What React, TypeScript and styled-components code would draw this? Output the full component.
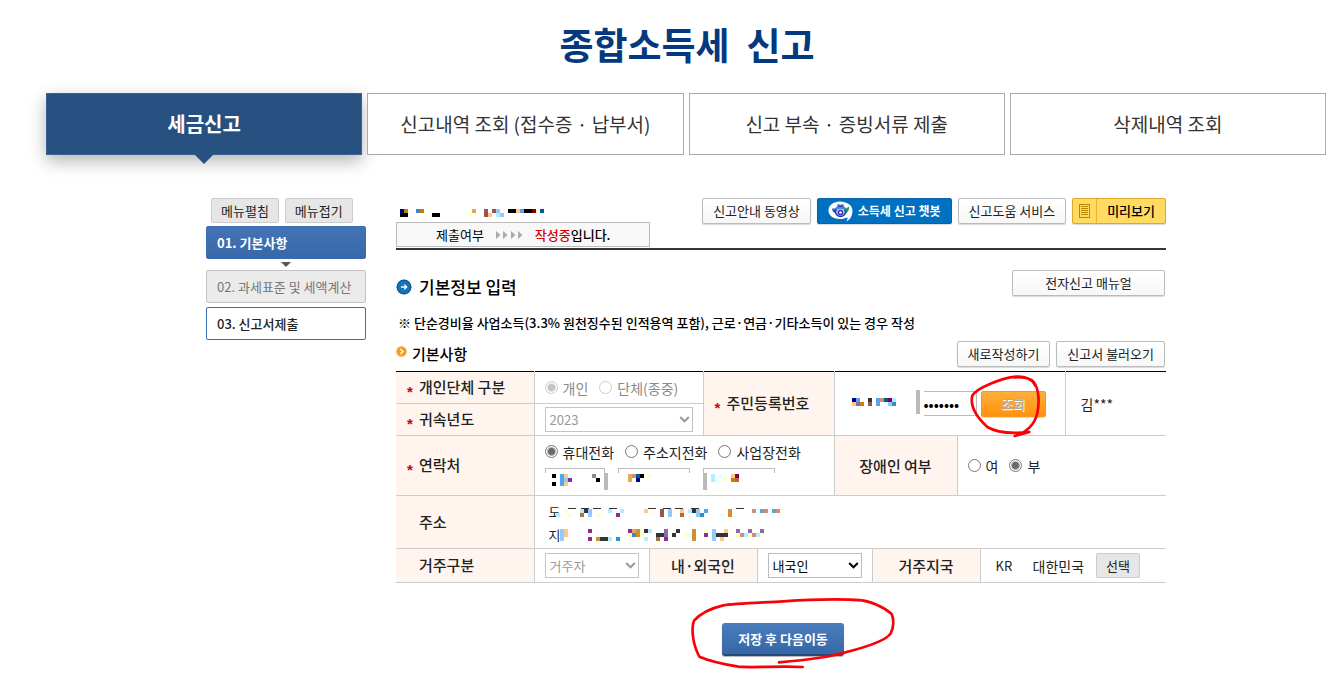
import React from 'react';
import styled, { createGlobalStyle, css } from 'styled-components';

const GlobalStyle = createGlobalStyle`
  *, *::before, *::after { box-sizing: border-box; }
  body {
    margin: 0;
    background: #fff;
    color: #222;
    font-family: "Noto Sans CJK KR", "Noto Sans", sans-serif;
    font-size: 14px;
    line-height: 20px;
  }
  button, input, select { font-family: inherit; margin: 0; }
  svg { display: block; }
`;

/* ---------- pixelated private data ---------- */

const PALETTE: Record<string, string> = {
  k: '#000000', K: '#333338', g: '#8a8a8a', n: '#000080', B: '#0055a5', b: '#2f8fd0',
  s: '#55a5ea', l: '#8fcbff', c: '#b5ecff', q: '#e4ffff', y: '#ffffcc', p: '#ffc985',
  o: '#e8a552', d: '#d09030', t: '#d09070', r: '#a05050', w: '#b07030', G: '#c88000',
  m: '#800050', M: '#800000', v: '#9068b0', V: '#8a2f90',
};

const CELL = 4;

interface MosaicProps {
  cols: number;
  rows: string[];
  top?: number[];
}

const Pixels = styled.svg`
  flex: none;
`;

function Mosaic({ cols, rows, top }: MosaicProps) {
  const width = cols * CELL;
  const offset = top ? 1 : 0;
  const height = rows.length * CELL + offset;
  return (
    <Pixels width={width} height={height} viewBox={`0 0 ${width} ${height}`} shapeRendering="crispEdges" aria-hidden="true">
      {top?.map((x) => <rect key={x} x={x} y={0} width={8} height={1} fill="#333" />)}
      {rows.flatMap((row, y) =>
        row.split(' ').filter(Boolean).map((token) => {
          const col = parseInt(token, 10);
          return (
            <rect key={`${y}-${token}`} x={col * CELL} y={y * CELL + offset} width={CELL} height={CELL} fill={PALETTE[token.slice(-1)]} />
          );
        }),
      )}
    </Pixels>
  );
}

/* ---------- page frame ---------- */

const Page = styled.div`
  padding: 14px 13px 20px 46px;
`;

const Title = styled.h1`
  margin: 0 0 19px;
  padding-left: 2px;
  font-size: 37px;
  line-height: 60px;
  font-weight: 700;
  color: #04397f;
  text-align: center;
  white-space: pre;
`;

const Tabs = styled.nav`
  display: grid;
  grid-template-columns: repeat(4, 1fr);
  gap: 5px;
`;

const Tab = styled.a<{ $active?: boolean }>`
  position: relative;
  display: flex;
  align-items: center;
  justify-content: center;
  height: 62px;
  border: 1px solid #aaa;
  background: #fff;
  color: #333;
  font-size: 19px;
  line-height: 28px;
  text-decoration: none;
  white-space: nowrap;
  ${({ $active }) => $active && css`
    border-color: #3c6290;
    background: #265080;
    color: #fff;
    font-size: 20px;
    font-weight: 700;
    box-shadow: 0 6px 16px rgba(0, 0, 0, 0.3);
    &::after {
      content: "";
      position: absolute;
      top: 100%;
      left: 50%;
      margin-left: -10px;
      border: 10px solid transparent;
      border-top-color: #265080;
      border-bottom: 0;
    }
  `}
`;

const Body = styled.div`
  display: flex;
  gap: 30px;
  max-width: 960px;
  margin: 43px auto 0;
`;

/* ---------- buttons ---------- */

const Button = styled.button<{ $wide?: boolean }>`
  height: 26px;
  min-width: ${({ $wide }) => ($wide ? '153px' : '0')};
  padding: 0 10px;
  border: 1px solid #bbb;
  border-radius: 2px;
  background: linear-gradient(#fff, #f7f7f7);
  box-shadow: 0 1px 1px rgba(0, 0, 0, 0.15);
  color: #222;
  font-size: 13px;
  line-height: 22px;
  white-space: nowrap;
`;

const GrayButton = styled(Button)`
  height: 25px;
  padding: 0 9px;
  border-color: #ccc;
  background: #e6e6e6;
  box-shadow: none;
`;

const ChatButton = styled(Button)`
  display: flex;
  align-items: center;
  gap: 5px;
  border-color: #0a62b0;
  background: #0070c0;
  color: #fff;
  font-size: 12px;
  font-weight: 700;
`;

const PreviewButton = styled(Button)`
  display: flex;
  align-items: stretch;
  padding: 0;
  border-color: #e0a72b;
  background: #ffdb62;
  color: #000;
  font-weight: 500;
`;

const PreviewIcon = styled.span`
  display: flex;
  align-items: center;
  padding: 0 6px;
  border-right: 1px solid #f0b030;
`;

const PreviewLabel = styled.span`
  padding: 0 10px;
  line-height: 24px;
`;

const LookupButton = styled(Button)`
  width: 65px;
  border-color: #f7981d;
  background: linear-gradient(#ffae3a, #ff920f);
  color: #aaa;
  font-weight: 500;
  text-shadow: 1px 1px 0 #fff;
`;

const SaveButton = styled.button`
  height: 33px;
  padding: 0 16px;
  border: 0;
  border-bottom: 2px solid #264a78;
  border-radius: 3px;
  background: linear-gradient(#4a7dbd, #3767a5);
  box-shadow: 0 1px 1px rgba(0, 0, 0, 0.3);
  color: #fff;
  font-size: 13px;
  font-weight: 700;
  line-height: 22px;
`;

/* ---------- side menu ---------- */

const Side = styled.aside`
  flex: none;
  width: 160px;
`;

const SideTools = styled.div`
  display: flex;
  gap: 6px;
  margin-bottom: 3px;
  padding-left: 5px;
`;

const StepArrow = styled.span`
  display: block;
  width: 10px;
  margin: 3px auto;
  border: 5px solid transparent;
  border-top-color: #555;
  border-bottom: 0;
`;

const Step = styled.a<{ $state: 'current' | 'locked' | 'open' }>`
  display: block;
  height: 33px;
  margin-bottom: 4px;
  padding: 0 10px;
  border: 1px solid #3c6eb4;
  border-radius: 2px;
  font-size: 13px;
  line-height: 31px;
  font-weight: 500;
  color: #222;
  text-decoration: none;
  white-space: nowrap;
  ${({ $state }) => $state === 'current' && css`
    margin-bottom: 0;
    background: linear-gradient(#4374b6, #3868a8);
    color: #fff;
    font-weight: 700;
  `}
  ${({ $state }) => $state === 'locked' && css`
    border-color: #c4c4c4;
    background: #ebebeb;
    color: #777;
    font-weight: 400;
  `}
`;

/* ---------- main column ---------- */

const Main = styled.main`
  flex: 1;
  min-width: 0;
`;

const TopBar = styled.header`
  display: flex;
  justify-content: space-between;
  height: 52px;
  border-bottom: 2px solid #333338;
`;

const Status = styled.div`
  display: flex;
  flex-direction: column;
  gap: 5px;
  padding-top: 11px;
`;

const NameLine = styled.div`
  padding-left: 4px;
`;

const StatusBox = styled.div`
  display: flex;
  align-items: center;
  gap: 12px;
  width: 254px;
  height: 25px;
  padding-left: 39px;
  border: 1px solid #bbb;
  background: #f8f8f8;
  color: #000;
  font-size: 13px;
`;

const Red = styled.span`
  color: #d60000;
`;

const Medium = styled.span`
  font-weight: 500;
`;

const ButtonRow = styled.div`
  display: flex;
  align-items: flex-start;
  gap: 6px;
`;

const HeadRow = styled.div<{ $top: number }>`
  display: flex;
  align-items: center;
  justify-content: space-between;
  margin-top: ${({ $top }) => $top}px;
  padding-right: 1px;
`;

const SectionTitle = styled.h2`
  display: flex;
  align-items: center;
  gap: 7px;
  margin: 8px 0 0;
  color: #000;
  font-size: 17px;
  line-height: 20px;
  font-weight: 500;
`;

const SubTitle = styled.h3`
  display: flex;
  align-items: center;
  gap: 5px;
  margin: 0;
  color: #000;
  font-size: 15px;
  line-height: 26px;
  font-weight: 500;
  svg { margin-bottom: 6px; }
`;

const Note = styled.p`
  margin: 16px 0 0;
  padding-left: 2px;
  color: #000;
  font-size: 13px;
  line-height: 20px;
  font-weight: 500;
`;

/* ---------- form table ---------- */

const Form = styled.table`
  width: 100%;
  margin-top: 4px;
  table-layout: fixed;
  border-collapse: collapse;
  border-top: 1px solid #000;
`;

const Row = styled.tr<{ $h: number }>`
  height: ${({ $h }) => $h}px;
`;

const Head = styled.th<{ $center?: boolean }>`
  padding: 0 0 0 ${({ $center }) => ($center ? '0' : '11px')};
  border-right: 1px solid #ccc;
  border-bottom: 1px solid #ccc;
  background: #fff5ee;
  color: #222;
  font-size: 15px;
  line-height: 20px;
  font-weight: 500;
  text-align: ${({ $center }) => ($center ? 'center' : 'left')};
  white-space: nowrap;
`;

const Cell = styled.td`
  padding: 0 0 0 10px;
  border-bottom: 1px solid #ccc;
  & + th { border-left: 1px solid #ccc; }
`;

const NameCell = styled(Cell)`
  padding-left: 15px;
  border-left: 1px solid #ccc;
`;

const CountryCell = styled(Cell)`
  padding-left: 15px;
`;

const AddressCell = styled(Cell)`
  padding-top: 3px;
`;

const Star = styled.span<{ $blank?: boolean }>`
  display: inline-block;
  width: 12px;
  color: #d00000;
  font-family: "Liberation Sans", sans-serif;
  font-size: 15px;
  font-weight: 700;
  line-height: 12px;
  vertical-align: sub;
  visibility: ${({ $blank }) => ($blank ? 'hidden' : 'visible')};
`;

const Line = styled.div<{ $gap?: number }>`
  display: flex;
  align-items: center;
  gap: ${({ $gap }) => $gap ?? 0}px;
`;

const RadioLabel = styled.label<{ $off?: boolean }>`
  display: inline-flex;
  align-items: center;
  gap: 5px;
  color: ${({ $off }) => ($off ? '#8a8a8a' : '#222')};
  font-size: 14px;
  line-height: 20px;
  white-space: nowrap;
`;

const Radio = styled.input`
  appearance: none;
  width: 13px;
  height: 13px;
  border: 1px solid #767676;
  border-radius: 50%;
  background: #fff;
  &:checked { background: radial-gradient(circle, #6a6a6a 0 3px, #fff 5px); }
  &:disabled { border-color: #ccc; }
  &:checked:disabled { background: radial-gradient(circle, #c4c4c4 0 3px, #fff 5px); }
`;

const SelectBox = styled.span<{ $w: number }>`
  display: inline-grid;
  align-items: center;
  width: ${({ $w }) => $w}px;
  vertical-align: middle;
  select, svg { grid-area: 1 / 1; }
  svg { justify-self: end; margin-right: 3px; pointer-events: none; }
`;

const Select = styled.select`
  appearance: none;
  width: 100%;
  height: 25px;
  padding: 0 4px;
  border: 1px solid #bbb;
  border-radius: 0;
  background: #fff;
  color: #000;
  font-size: 13px;
  line-height: 22px;
  &:disabled { color: #999; opacity: 1; border-color: #c4c4c4; }
`;

const Secret = styled.input`
  width: 53px;
  height: 25px;
  margin-right: 4px;
  padding: 0;
  border: 1px solid #bbb;
  border-left: 0;
  border-radius: 0;
  color: #000;
  font-size: 15px;
`;

const SsnLine = styled.div`
  display: flex;
  align-items: center;
  padding-left: 7px;
`;

const SsnFront = styled.span`
  display: flex;
  align-items: center;
  gap: 20px;
  padding: 0 4px 4px 0;
`;

const Bar = styled.span`
  width: 4px;
  height: 24px;
  background: #bbb;
`;

const Marked = styled.span`
  position: relative;
  display: inline-block;
`;

const LookupMark = styled.svg`
  position: absolute;
  top: -18px;
  left: -11px;
  pointer-events: none;
`;

const SaveMark = styled.svg`
  position: absolute;
  top: -33px;
  left: -42px;
  pointer-events: none;
`;

const PhoneRow = styled.div`
  display: flex;
  gap: 13px;
  margin-top: 6px;
`;

const Phone = styled.span<{ $w: number }>`
  position: relative;
  display: block;
  width: ${({ $w }) => $w}px;
  height: 22px;
`;

const PhoneInput = styled.input`
  display: block;
  width: 100%;
  height: 22px;
  padding: 0;
  border: 1px solid #bbb;
  border-bottom: 0;
  border-radius: 0;
`;

const PhoneCover = styled.span<{ $bar?: 'left' | 'right'; $pad: number }>`
  position: absolute;
  top: 5px;
  right: ${({ $bar }) => ($bar === 'right' ? '-3px' : '0')};
  bottom: 0;
  left: 0;
  padding: 1px 0 0 ${({ $pad }) => $pad}px;
  background: #fff;
  border-left: ${({ $bar }) => ($bar === 'left' ? '4px solid #bbb' : '0')};
  border-right: ${({ $bar }) => ($bar === 'right' ? '4px solid #bbb' : '0')};
`;

const AddressLine = styled.div`
  display: flex;
  align-items: center;
  height: 23px;
  padding-left: 4px;
  font-size: 13px;
`;

const FirstLetter = styled.span`
  width: 7px;
  white-space: nowrap;
`;

const CountryCode = styled.span`
  width: 37px;
  font-size: 13px;
`;

const CountryName = styled.span`
  margin-right: 12px;
`;

const Submit = styled.div`
  margin-top: 40px;
  padding-left: 4px;
  text-align: center;
`;

/* ---------- small drawings ---------- */

function ChatIcon() {
  return (
    <svg width="25" height="22" viewBox="0 0 25 22" aria-hidden="true">
      <path d="M12 1.500C5.500 1.500 .5 5.200 .5 10.500S5.500 19 12 19c3 0 5.300-.6 7.300-1.800.4 1.500 0 2.800-1 4.300 4-1.600 6.200-6 6.200-11 0-5.300-6-9-12.500-9z" fill="#fff" />
      <path d="M8.500 6.500L10 4l2.500 1L15 4l1.500 2.500z" fill="#3a6cc8" />
      <path d="M4 8.500l4 .2-1 4.300c-1.800-.6-2.800-2.200-3-4.500z" fill="#2a4fc0" />
      <path d="M21 6.500c.3 4-1.200 6.300-4 7.300L16 10z" fill="#1f9a50" />
      <circle cx="12.500" cy="11.500" r="5" fill="#a9c4f5" stroke="#2336b0" strokeWidth="1.500" />
      <path d="M7 9c3.500-1.700 7.500-1.700 11 0" fill="none" stroke="#3e86dc" strokeWidth="2" />
      <circle cx="12.500" cy="12.500" r="2" fill="#fff" stroke="#2a2fb4" strokeWidth="1.300" />
    </svg>
  );
}

function SheetIcon() {
  return (
    <svg width="11" height="14" viewBox="0 0 11 14" shapeRendering="crispEdges" aria-hidden="true">
      <rect x="0.500" y="0.500" width="10" height="13" fill="none" stroke="#b98900" />
      <path d="M2 2.500h7M2 4.500h7M2 6.500h7M2 8.500h7M2 10.500h7" stroke="#b98900" />
    </svg>
  );
}

function Chevrons() {
  return (
    <svg width="27" height="8" viewBox="0 0 27 8" aria-hidden="true">
      {[0, 7, 15, 22].map((x) => <path key={x} d={`M${x} 0l4.500 4-4.500 4z`} fill="#aaa" />)}
    </svg>
  );
}

function BlueArrow() {
  return (
    <svg width="16" height="16" viewBox="0 0 16 16" aria-hidden="true">
      <circle cx="8" cy="8" r="7.500" fill="#1673b8" />
      <circle cx="8" cy="8" r="6.800" fill="none" stroke="#0d5590" />
      <path d="M5 8h5.500M8.300 5.600L10.700 8l-2.400 2.400" fill="none" stroke="#fff" strokeWidth="1.300" />
    </svg>
  );
}

function OrangeArrow() {
  return (
    <svg width="11" height="11" viewBox="0 0 11 11" aria-hidden="true">
      <circle cx="5.500" cy="5.500" r="5.300" fill="#f7981d" />
      <circle cx="5.500" cy="5.500" r="4.600" fill="none" stroke="#ffc066" strokeWidth="0.800" />
      <path d="M4.300 3l2.600 2.500L4.300 8" fill="none" stroke="#fff" strokeWidth="1.500" />
    </svg>
  );
}

function Caret({ color }: { color: string }) {
  return (
    <svg width="11" height="7" viewBox="0 0 11 7" aria-hidden="true">
      <path d="M1.200 1l4.300 4.300L9.800 1" fill="none" stroke={color} strokeWidth="2" />
    </svg>
  );
}

/* ---------- form parts ---------- */

interface DropProps {
  label: string;
  value: string;
  width: number;
  disabled?: boolean;
}

function Drop({ label, value, width, disabled }: DropProps) {
  return (
    <SelectBox $w={width}>
      <Select aria-label={label} disabled={disabled} defaultValue={value}>
        <option>{value}</option>
      </Select>
      <Caret color={disabled ? '#999' : '#000'} />
    </SelectBox>
  );
}

interface ChoiceProps {
  name: string;
  text: string;
  checked?: boolean;
  disabled?: boolean;
}

function Choice({ name, text, checked, disabled }: ChoiceProps) {
  return (
    <RadioLabel $off={disabled}>
      <Radio type="radio" name={name} defaultChecked={checked} disabled={disabled} />
      {text}
    </RadioLabel>
  );
}

const COLUMNS = [138, 115, 54, 54, 77, 38, 85, 23, 85];

export default function App() {
  return (
    <>
      <GlobalStyle />
      <Page>
        <Title>{'종합소득세  신고'}</Title>
        <Tabs>
          <Tab href="#file" $active>세금신고</Tab>
          <Tab href="#history">신고내역 조회 (접수증 · 납부서)</Tab>
          <Tab href="#documents">신고 부속 · 증빙서류 제출</Tab>
          <Tab href="#deleted">삭제내역 조회</Tab>
        </Tabs>

        <Body>
          <Side>
            <SideTools>
              <GrayButton type="button">메뉴펼침</GrayButton>
              <GrayButton type="button">메뉴접기</GrayButton>
            </SideTools>
            <Step href="#step1" $state="current">01. 기본사항</Step>
            <StepArrow />
            <Step href="#step2" $state="locked">02. 과세표준 및 세액계산</Step>
            <Step href="#step3" $state="open">03. 신고서제출</Step>
          </Side>

          <Main>
            <TopBar>
              <Status>
                <NameLine>
                  <Mosaic
                    cols={36}
                    rows={[
                      '0n 1G 4b 5G 18o 21r 23r 24l 27k 28k 29p 30s 31k 32k 33M 34y 35B',
                      '0k 1k 8k 9k 17y 21r 22p 24c 25l',
                    ]}
                  />
                </NameLine>
                <StatusBox>
                  <span>제출여부</span>
                  <Chevrons />
                  <Medium><Red>작성중</Red>입니다.</Medium>
                </StatusBox>
              </Status>
              <ButtonRow>
                <Button type="button">신고안내 동영상</Button>
                <ChatButton type="button"><ChatIcon />소득세 신고 챗봇</ChatButton>
                <Button type="button">신고도움 서비스</Button>
                <PreviewButton type="button">
                  <PreviewIcon><SheetIcon /></PreviewIcon>
                  <PreviewLabel>미리보기</PreviewLabel>
                </PreviewButton>
              </ButtonRow>
            </TopBar>

            <HeadRow $top={19}>
              <SectionTitle><BlueArrow />기본정보 입력</SectionTitle>
              <Button type="button" $wide>전자신고 매뉴얼</Button>
            </HeadRow>
            <Note>※ 단순경비율 사업소득(3.3% 원천징수된 인적용역 포함), 근로·연금·기타소득이 있는 경우 작성</Note>
            <HeadRow $top={8}>
              <SubTitle><OrangeArrow />기본사항</SubTitle>
              <ButtonRow>
                <Button type="button">새로작성하기</Button>
                <Button type="button">신고서 불러오기</Button>
              </ButtonRow>
            </HeadRow>

            <Form>
              <colgroup>
                {COLUMNS.map((width, i) => <col key={i} width={width} />)}
                <col />
              </colgroup>
              <tbody>
                <Row $h={32}>
                  <Head scope="row"><Star>*</Star>개인단체 구분</Head>
                  <Cell colSpan={2}>
                    <Line $gap={11}>
                      <Choice name="kind" text="개인" checked disabled />
                      <Choice name="kind" text="단체(종중)" disabled />
                    </Line>
                  </Cell>
                  <Head scope="row" colSpan={2} rowSpan={2}><Star>*</Star>주민등록번호</Head>
                  <Cell colSpan={4} rowSpan={2}>
                    <SsnLine>
                      <SsnFront>
                        <Mosaic cols={11} rows={['0n 1s 4K 6s 7t 8B 9m 10c', '0p 1v 2G 4r 6s 9l 10b']} />
                        <Bar />
                      </SsnFront>
                      <Secret type="password" aria-label="주민등록번호 뒷자리" defaultValue="0000000" />
                      <Marked>
                        <LookupButton type="button" disabled>조회</LookupButton>
                        <LookupMark width="73" height="67" viewBox="810 115 219 201" aria-hidden="true">
                          <path
                            d="M1005 152C998 134 975 124 948 126C905 130 830 160 817 183C810 212 822 240 862 277C890 294 930 298 988 292L944 304C975 296 1004 272 1012 235C1020 195 1015 150 995 136C980 128 960 127 945 128"
                            fill="none" stroke="#fb0007" strokeWidth="8" strokeLinecap="round" strokeLinejoin="round"
                          />
                        </LookupMark>
                      </Marked>
                    </SsnLine>
                  </Cell>
                  <NameCell rowSpan={2}>김***</NameCell>
                </Row>
                <Row $h={32}>
                  <Head scope="row"><Star>*</Star>귀속년도</Head>
                  <Cell colSpan={2}><Drop label="귀속년도" value="2023" width={148} disabled /></Cell>
                </Row>
                <Row $h={60}>
                  <Head scope="row"><Star>*</Star>연락처</Head>
                  <Cell colSpan={4}>
                    <Line $gap={11}>
                      <Choice name="phone" text="휴대전화" checked />
                      <Choice name="phone" text="주소지전화" />
                      <Choice name="phone" text="사업장전화" />
                    </Line>
                    <PhoneRow>
                      <Phone $w={60}>
                        <PhoneInput aria-label="전화번호 앞자리" />
                        <PhoneCover $bar="right" $pad={7}>
                          <Mosaic cols={12} rows={['0k 2s 3p 4q 10g', '2s 3l 4V 11k', '0k 2s 3p']} />
                        </PhoneCover>
                      </Phone>
                      <Phone $w={72}>
                        <PhoneInput aria-label="전화번호 가운데자리" />
                        <PhoneCover $pad={10}>
                          <Mosaic cols={6} rows={['0o 1t 2B 3k 5y', '0o 2n']} />
                        </PhoneCover>
                      </Phone>
                      <Phone $w={72}>
                        <PhoneInput aria-label="전화번호 뒷자리" />
                        <PhoneCover $bar="left" $pad={4}>
                          <Mosaic cols={7} rows={['0c 2q 5p 6m', '0c 1q 3y 5G 6w']} />
                        </PhoneCover>
                      </Phone>
                    </PhoneRow>
                  </Cell>
                  <Head scope="row" colSpan={2} $center>장애인 여부</Head>
                  <Cell colSpan={3}>
                    <Line $gap={11}>
                      <Choice name="disability" text="여" />
                      <Choice name="disability" text="부" checked />
                    </Line>
                  </Cell>
                </Row>
                <Row $h={53}>
                  <Head scope="row"><Star $blank>*</Star>주소</Head>
                  <AddressCell colSpan={9}>
                    <AddressLine>
                      <FirstLetter>도</FirstLetter>
                      <Mosaic
                        cols={56}
                        top={[12, 25, 37, 53, 92, 107, 119, 135, 180]}
                        rows={[
                          '2y 6c 7K 8l 13c 16c 22p 26r 28l 31p 33c 34K 35l 37s 43d 49t 51s 52t 54s 55t',
                          '0c 3y 6w 8l 10y 15V 26r 28l 31w 35l 36b 41q 43d',
                        ]}
                      />
                    </AddressLine>
                    <AddressLine>
                      <FirstLetter>지</FirstLetter>
                      <Mosaic
                        cols={54}
                        rows={[
                          '1l 2p 8V 18V 19o 20d 21y 22K 23c 27v 30K 34d 37y 39l 42p 45v 48v 51v',
                          '1l 2p 18y 19b 20d 21y 25K 26K 27v 29K 32y 33q 34d 37V 39l 40K 41K 42K 45y 46t 47c 48y 49t 50c 51y',
                          '1l 8V 10d 11K 12K 13c 15b 22c 25w 27V 34d 39l 41p',
                        ]}
                      />
                    </AddressLine>
                  </AddressCell>
                </Row>
                <Row $h={34}>
                  <Head scope="row"><Star $blank>*</Star>거주구분</Head>
                  <Cell><Drop label="거주구분" value="거주자" width={94} disabled /></Cell>
                  <Head scope="row" colSpan={2} $center>내·외국인</Head>
                  <Cell colSpan={2}><Drop label="내·외국인" value="내국인" width={94} /></Cell>
                  <Head scope="row" colSpan={2} $center>거주지국</Head>
                  <CountryCell colSpan={2}>
                    <Line>
                      <CountryCode>KR</CountryCode>
                      <CountryName>대한민국</CountryName>
                      <GrayButton type="button">선택</GrayButton>
                    </Line>
                  </CountryCell>
                </Row>
              </tbody>
            </Form>

            <Submit>
              <Marked>
                <SaveButton type="button">저장 후 다음이동</SaveButton>
                <SaveMark width="230" height="90" viewBox="0 0 690 270" aria-hidden="true">
                  <path
                    d="M297 217C370 211 450 202 500 186C570 168 620 150 632 130C642 112 642 88 635 72C610 50 570 34 545 31C480 26 400 28 310 34C240 38 160 40 130 46C95 54 60 72 42 92C34 110 36 160 58 200C90 214 140 224 175 230C230 234 290 227 368 231"
                    fill="none" stroke="#fb0007" strokeWidth="8" strokeLinecap="round" strokeLinejoin="round"
                  />
                </SaveMark>
              </Marked>
            </Submit>
          </Main>
        </Body>
      </Page>
    </>
  );
}
